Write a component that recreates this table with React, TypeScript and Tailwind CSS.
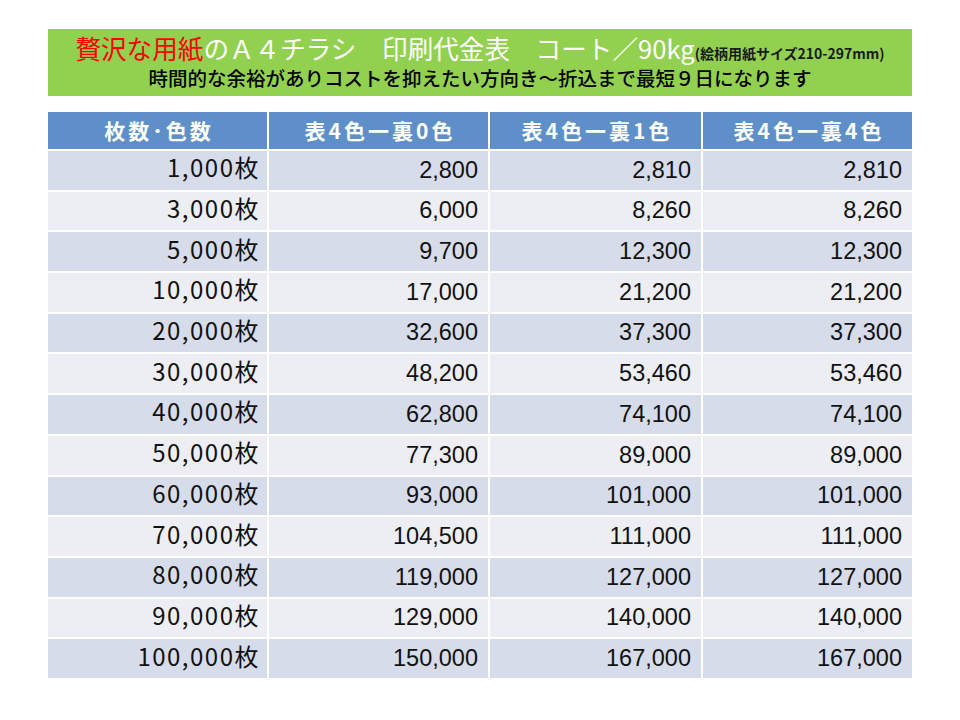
const rows: [string, string, string, string][] = [
  ["1,000枚", "2,800", "2,810", "2,810"],
  ["3,000枚", "6,000", "8,260", "8,260"],
  ["5,000枚", "9,700", "12,300", "12,300"],
  ["10,000枚", "17,000", "21,200", "21,200"],
  ["20,000枚", "32,600", "37,300", "37,300"],
  ["30,000枚", "48,200", "53,460", "53,460"],
  ["40,000枚", "62,800", "74,100", "74,100"],
  ["50,000枚", "77,300", "89,000", "89,000"],
  ["60,000枚", "93,000", "101,000", "101,000"],
  ["70,000枚", "104,500", "111,000", "111,000"],
  ["80,000枚", "119,000", "127,000", "127,000"],
  ["90,000枚", "129,000", "140,000", "140,000"],
  ["100,000枚", "150,000", "167,000", "167,000"],
];

const heads = ["枚数･色数", "表4色一裏0色", "表4色一裏1色", "表4色一裏4色"];

const jp = "font-['Noto_Sans_CJK_JP',sans-serif]";
const num = "font-['Liberation_Sans','Noto_Sans_CJK_JP',sans-serif]";

export default function App() {
  return (
    <div className="w-[960px] h-[720px] bg-white pt-[29px] pl-[48px]">
      {/* title banner */}
      <div className={`w-[864px] h-[67px] bg-[#92d050] flex flex-col items-center pt-[2px] ${jp}`}>
        <div className="h-[34px] flex items-baseline whitespace-nowrap leading-[34px]">
          <span className="text-[25.6px] text-[#ff0000]">贅沢な用紙</span>
          <span className="text-[25.6px] text-white">のＡ４チラシ　印刷代金表　コート／90kg</span>
          <span className="text-[14px] leading-none font-bold text-[#1a1a1a]">(絵柄用紙サイズ210-297mm)</span>
        </div>
        <div className="text-[19.5px] leading-[26px] font-medium text-black whitespace-nowrap">
          時間的な余裕がありコストを抑えたい方向き～折込まで最短９日になります
        </div>
      </div>

      {/* price table */}
      <div className="mt-[16px] w-[864px] grid grid-cols-[219px_219px_211px_209px] gap-[2px] bg-white">
        {heads.map((h) => (
          <div
            key={h}
            className={`h-[37px] bg-[#5e8fc8] text-white text-[21px] font-bold tracking-[3px] pl-[3px] flex items-center justify-center ${jp}`}
          >
            {h}
          </div>
        ))}
        {rows.map((r, i) => {
          const bg = i % 2 === 0 ? "bg-[#d6dcea]" : "bg-[#eceef4]";
          return r.map((c, j) => (
            <div
              key={`${i}-${j}`}
              className={`h-[38.7px] ${bg} flex items-center justify-end text-[#111] ${
                j === 0
                  ? `pr-[7px] pb-[6px] text-[24px] tracking-[1.5px] ${jp}`
                  : `pr-[10px] text-[23.5px] ${num}`
              }`}
            >
              {c}
            </div>
          ));
        })}
      </div>
    </div>
  );
}
